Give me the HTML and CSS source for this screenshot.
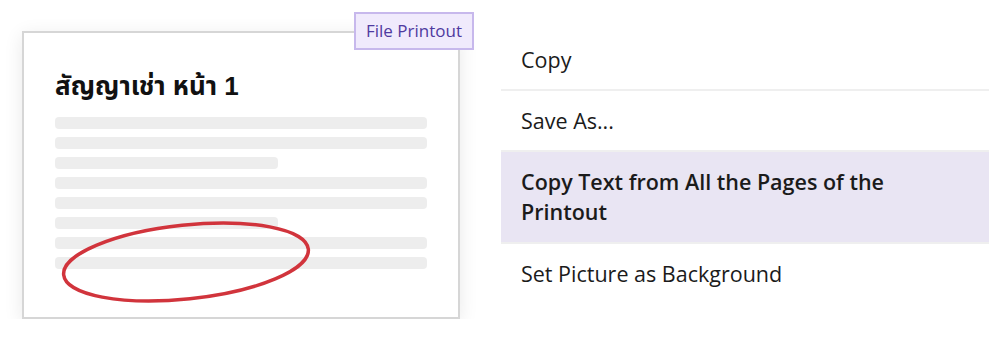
FILE: index.html
```html
<!DOCTYPE html>
<html lang="en">
<head>
    <meta charset="UTF-8">
    <meta name="viewport" content="width=device-width, initial-scale=1.0">
    <title>File Printout</title>
    <link rel="stylesheet" href="styles.css">
</head>
<body>
    <div class="scene">
        <div class="printout">
            <div class="label">File Printout</div>
            <h1 class="page-title">สัญญาเช่า หน้า 1</h1>
            <div class="lines">
                <div class="line"></div>
                <div class="line"></div>
                <div class="line short"></div>
                <div class="line"></div>
                <div class="line"></div>
                <div class="line short"></div>
                <div class="line"></div>
                <div class="line"></div>
            </div>
            <svg class="circle" viewBox="0 0 434 284" width="434" height="284">
                <ellipse cx="162" cy="229" rx="123" ry="37" transform="rotate(-6 162 229)"
                         fill="none" stroke="#d1343c" stroke-width="3.5"/>
            </svg>
        </div>

        <ul class="menu">
            <li class="menu-item">Copy</li>
            <li class="menu-item">Save As...</li>
            <li class="menu-item active">Copy Text from All the Pages of the Printout</li>
            <li class="menu-item">Set Picture as Background</li>
        </ul>
    </div>
</body>
</html>
```

FILE: styles.css
```css
body {
    margin: 0;
    background-color: #fff;
    font-family: "Open Sans", "Noto Sans", sans-serif;
    color: #1b1b1b;
}

.scene {
    display: flex;
    align-items: flex-start;
    padding: 30px 0 0 22px;
}

.printout {
    position: relative;
    margin-top: 1px;
    width: 434px;
    height: 284px;
    border: 2px solid #d6d6d6;
    background-color: #fff;
    box-shadow: 0 4px 18px rgba(0, 0, 0, 0.09);
}

.label {
    position: absolute;
    top: -21px;
    right: -16px;
    padding: 6px 10px;
    font-size: 17px;
    line-height: 22px;
    color: #4f3aa0;
    background-color: #f0eafc;
    border: 2px solid #c7b8ec;
}

.page-title {
    margin: 37px 0 0 31px;
    font-family: "Liberation Sans", "Noto Sans Thai", sans-serif;
    font-size: 26px;
    font-weight: bold;
    line-height: 32px;
    color: #111;
}

.lines {
    display: flex;
    flex-direction: column;
    gap: 8px;
    margin: 15px 31px 0;
}

.line {
    height: 12px;
    border-radius: 4px;
    background-color: #ededed;
}

.line.short {
    width: 223px;
}

.circle {
    position: absolute;
    left: 0;
    top: 0;
}

.menu {
    list-style: none;
    margin: 0 0 0 41px;
    padding: 0;
    width: 488px;
}

.menu-item {
    padding: 15px 20px 14px;
    font-size: 21.5px;
    line-height: 30px;
    border-bottom: 2px solid #efefef;
}

.menu-item:last-child {
    border-bottom: none;
}

.menu-item.active {
    padding: 15px 90px 15px 20px;
    font-weight: 600;
    background-color: #e9e5f3;
}
```
